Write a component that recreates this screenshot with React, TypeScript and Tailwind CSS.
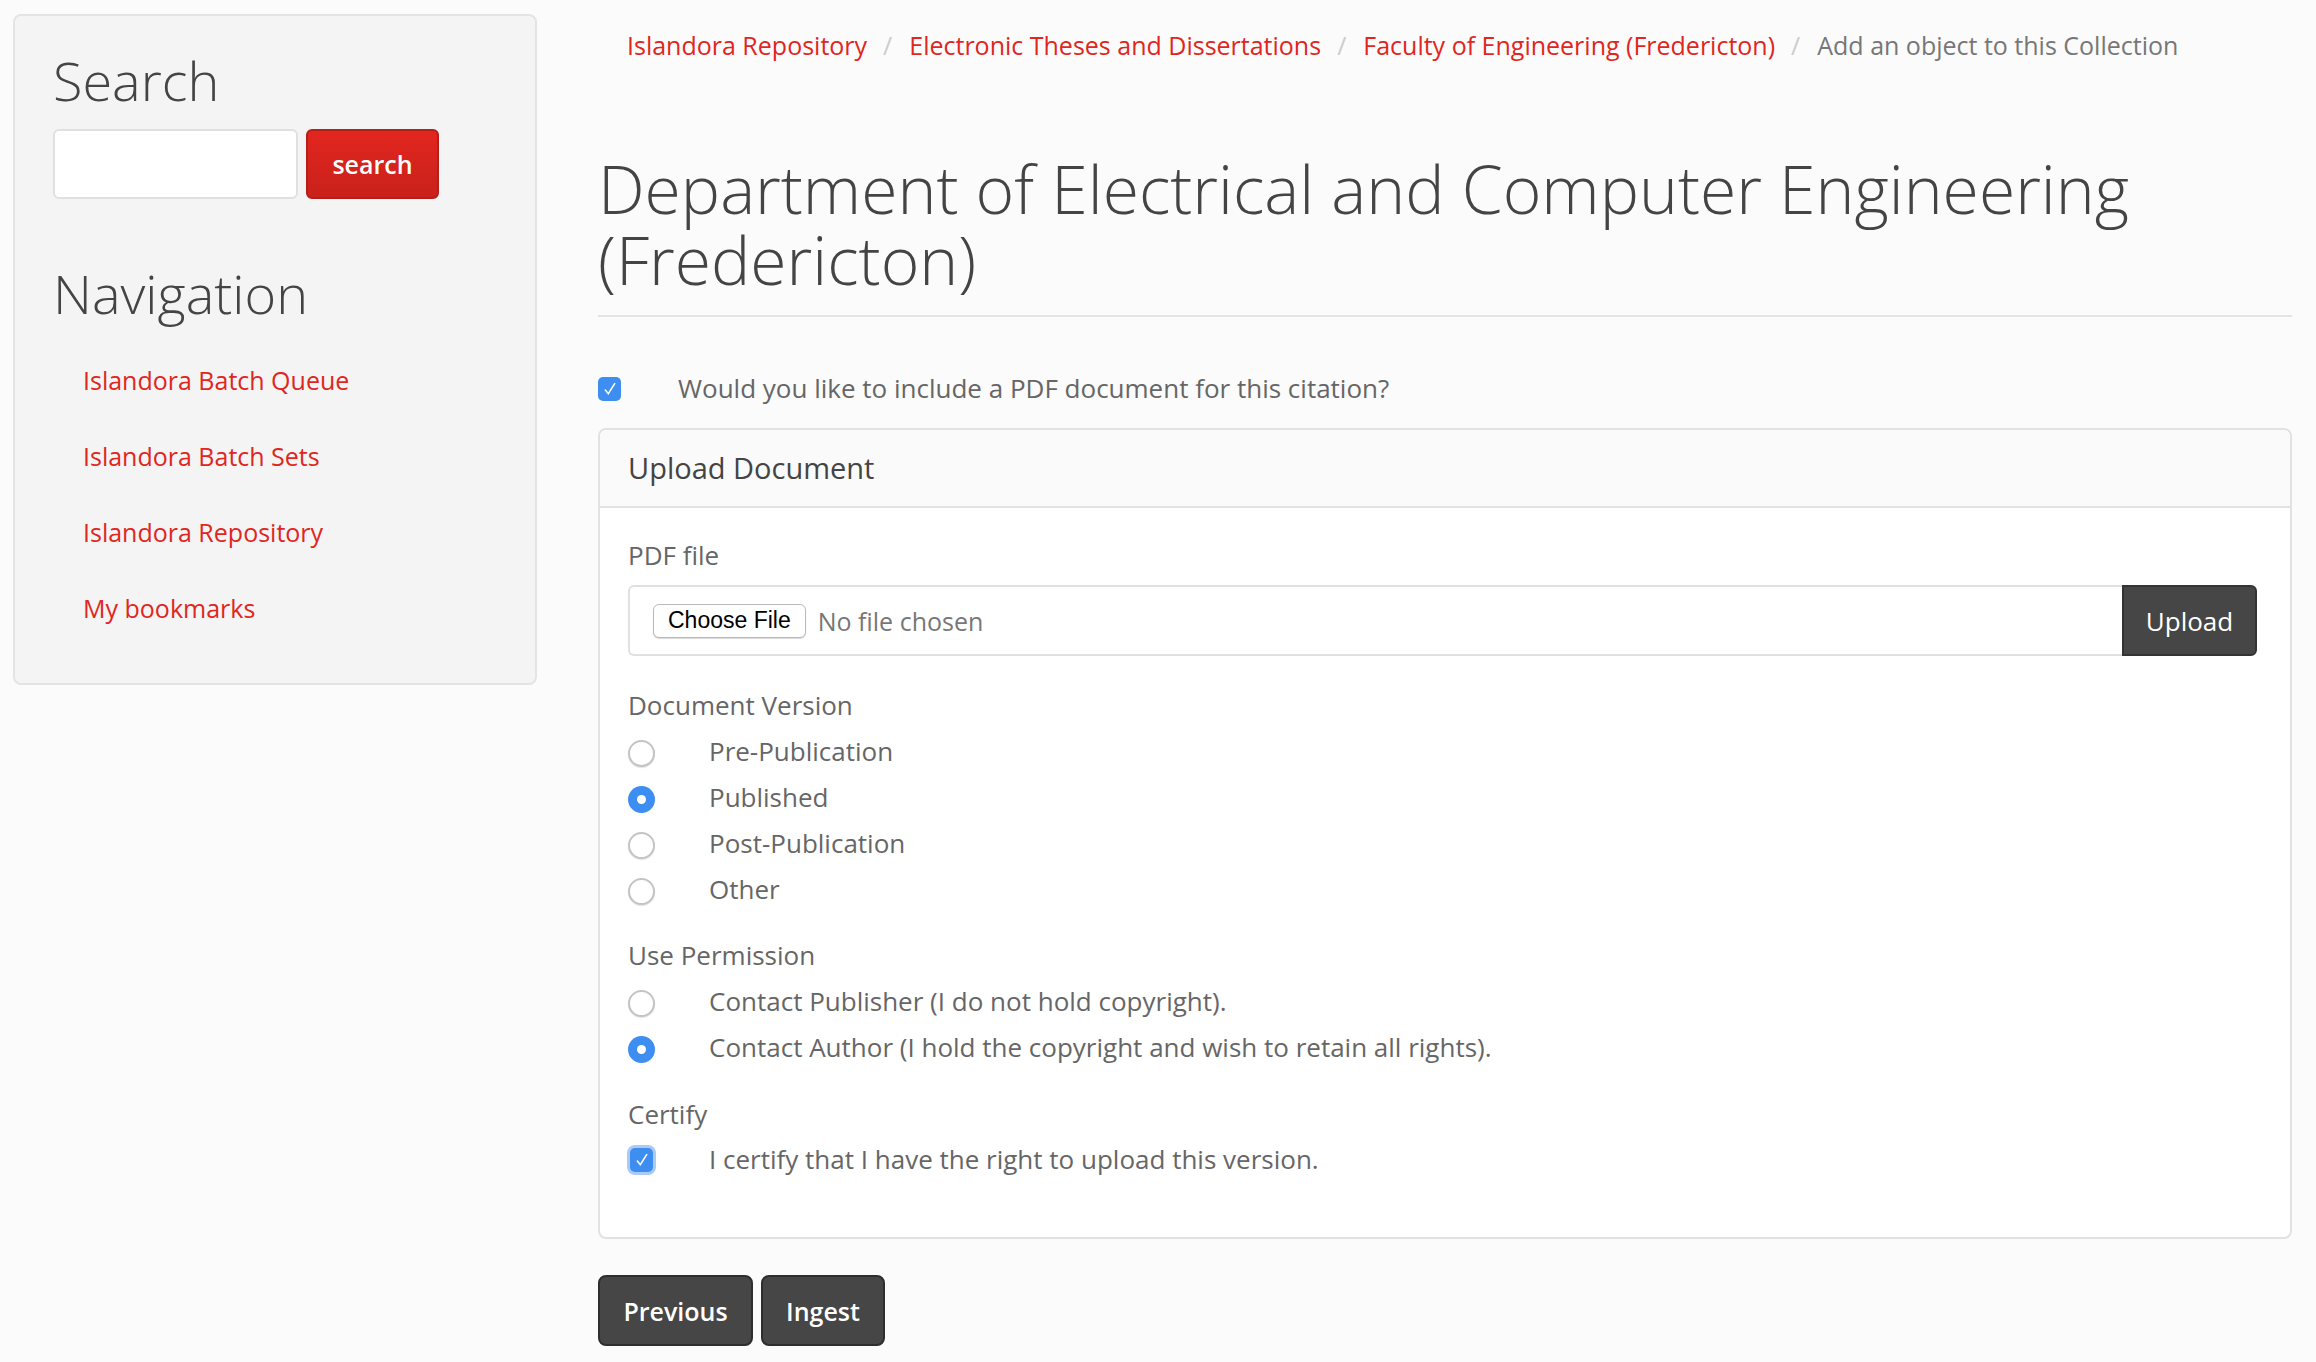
const links = ["Islandora Batch Queue", "Islandora Batch Sets", "Islandora Repository", "My bookmarks"]

function Check({ glow = false }: { glow?: boolean }) {
  return (
    <span
      className={
        "inline-flex h-[24px] w-[23px] items-center justify-center rounded-[5px] bg-[#3d8ef0] " +
        (glow ? "ring-[3px] ring-[#a9cbf6]" : "")
      }
    >
      <svg viewBox="0 0 24 24" className="h-[16px] w-[16px]" fill="none" stroke="white" strokeWidth="2.4" strokeLinecap="round">
        <path d="M5 13.5l4.5 5.5L19 4" />
      </svg>
    </span>
  )
}

function Radio({ on }: { on?: boolean }) {
  return on ? (
    <span className="inline-flex h-[27px] w-[27px] items-center justify-center rounded-full bg-[#3d8ef0]">
      <span className="h-[9px] w-[9px] rounded-full bg-white" />
    </span>
  ) : (
    <span className="inline-block h-[27px] w-[27px] rounded-full border-2 border-[#c4c4c4] bg-white shadow-[0_1px_1px_rgba(0,0,0,0.12)]" />
  )
}

function RadioRow({ label, on }: { label: string; on?: boolean }) {
  return (
    <div className="flex h-[46px] items-center">
      <span className="flex w-[81px] items-center pt-[4px]">
        <Radio on={on} />
      </span>
      <span>{label}</span>
    </div>
  )
}

export default function App() {
  return (
    <div className="min-h-screen bg-[#fbfbfb] font-['Open_Sans',sans-serif] text-[26px] leading-[40px] text-[#666]">
      <div className="flex items-start pl-[13px] pr-[24px]">
        {/* sidebar */}
        <aside className="mt-[14px] w-[524px] shrink-0 rounded-[8px] border-2 border-[#e4e4e4] bg-[#f4f4f4] pl-[38px] pr-[30px] pt-[33px] pb-[38px]">
          <h2 className="text-[54px] font-light leading-[62px] text-[#444]">Search</h2>
          <div className="mt-[18px] flex gap-[8px]">
            <input className="h-[70px] w-[245px] rounded-[6px] border-2 border-[#e0e0e0] bg-white" />
            <button className="h-[70px] w-[133px] rounded-[6px] border-2 border-[#b51f19] bg-gradient-to-b from-[#e2261f] to-[#c9211b] text-[25px] font-semibold text-white">
              search
            </button>
          </div>
          <h2 className="mt-[63px] text-[54px] font-light leading-[62px] text-[#444]">Navigation</h2>
          <ul className="mt-[17px] pl-[30px] text-[25px]">
            {links.map((l) => (
              <li key={l} className="flex h-[76px] items-center pt-[2px] text-[#e0261e]">
                {l}
              </li>
            ))}
          </ul>
        </aside>

        {/* main */}
        <main className="ml-[61px] min-w-0 flex-1">
          <nav className="mt-[25px] flex whitespace-nowrap pl-[29px] text-[25px]">
            <a className="text-[#e0261e]">Islandora Repository</a>
            <span className="pl-[16px] pr-[17px] text-[#ccc]">/</span>
            <a className="text-[#e0261e]">Electronic Theses and Dissertations</a>
            <span className="pl-[16px] pr-[17px] text-[#ccc]">/</span>
            <a className="text-[#e0261e]">Faculty of Engineering (Fredericton)</a>
            <span className="pl-[16px] pr-[17px] text-[#ccc]">/</span>
            <span className="text-[#777]">Add an object to this Collection</span>
          </nav>

          <h1 className="mt-[88px] text-[66px] font-light leading-[71px] text-[#444]">
            Department of Electrical and Computer Engineering (Fredericton)
          </h1>
          <div className="mt-[20px] h-[2px] bg-[#e4e4e4]" />

          <div className="mt-[51px] flex items-center">
            <span className="flex w-[80px] pt-[2px]">
              <Check />
            </span>
            <span>Would you like to include a PDF document for this citation?</span>
          </div>

          <section className="mt-[20px] rounded-[8px] border-2 border-[#e2e2e2] bg-white">
            <div className="flex h-[78px] items-center rounded-t-[8px] border-b-2 border-[#e2e2e2] bg-[#fafafa] pl-[28px] text-[29px] text-[#444]">
              Upload Document
            </div>
            <div className="pl-[28px] pr-[33px] pt-[27px] pb-[55px]">
              <div>PDF file</div>
              <div className="mt-[10px] flex h-[71px]">
                <div className="flex flex-1 items-center rounded-l-[6px] border-2 border-r-0 border-[#e0e0e0] bg-white pl-[23px]">
                  <span className="flex h-[34px] items-center rounded-[6px] border border-[#b9b9b9] bg-white px-[14px] font-['Liberation_Sans',sans-serif] text-[23px] leading-none text-black shadow-[0_1px_1px_rgba(0,0,0,0.15)]">
                    Choose File
                  </span>
                  <span className="ml-[12px] text-[25px] text-[#777]">No file chosen</span>
                </div>
                <button className="w-[135px] rounded-r-[6px] border-2 border-[#333] bg-[#454645] text-[26px] text-white">
                  Upload
                </button>
              </div>

              <div className="mt-[29px]">Document Version</div>
              <div className="mt-[3px]">
                <RadioRow label="Pre-Publication" />
                <RadioRow label="Published" on />
                <RadioRow label="Post-Publication" />
                <RadioRow label="Other" />
              </div>

              <div className="mt-[23px]">Use Permission</div>
              <div className="mt-[3px]">
                <RadioRow label="Contact Publisher (I do not hold copyright)." />
                <RadioRow label="Contact Author (I hold the copyright and wish to retain all rights)." on />
              </div>

              <div className="mt-[24px]">Certify</div>
              <div className="mt-[2px] flex h-[46px] items-center">
                <span className="flex w-[81px] pl-[2px] pt-[2px]">
                  <Check glow />
                </span>
                <span>I certify that I have the right to upload this version.</span>
              </div>
            </div>
          </section>

          <div className="mt-[36px] flex gap-[8px] pb-[20px]">
            <button className="h-[71px] w-[155px] rounded-[8px] border-2 border-[#2e2e2e] bg-[#454645] text-[25px] font-semibold text-white">
              Previous
            </button>
            <button className="h-[71px] w-[124px] rounded-[8px] border-2 border-[#2e2e2e] bg-[#454645] text-[25px] font-semibold text-white">
              Ingest
            </button>
          </div>
        </main>
      </div>
    </div>
  )
}
